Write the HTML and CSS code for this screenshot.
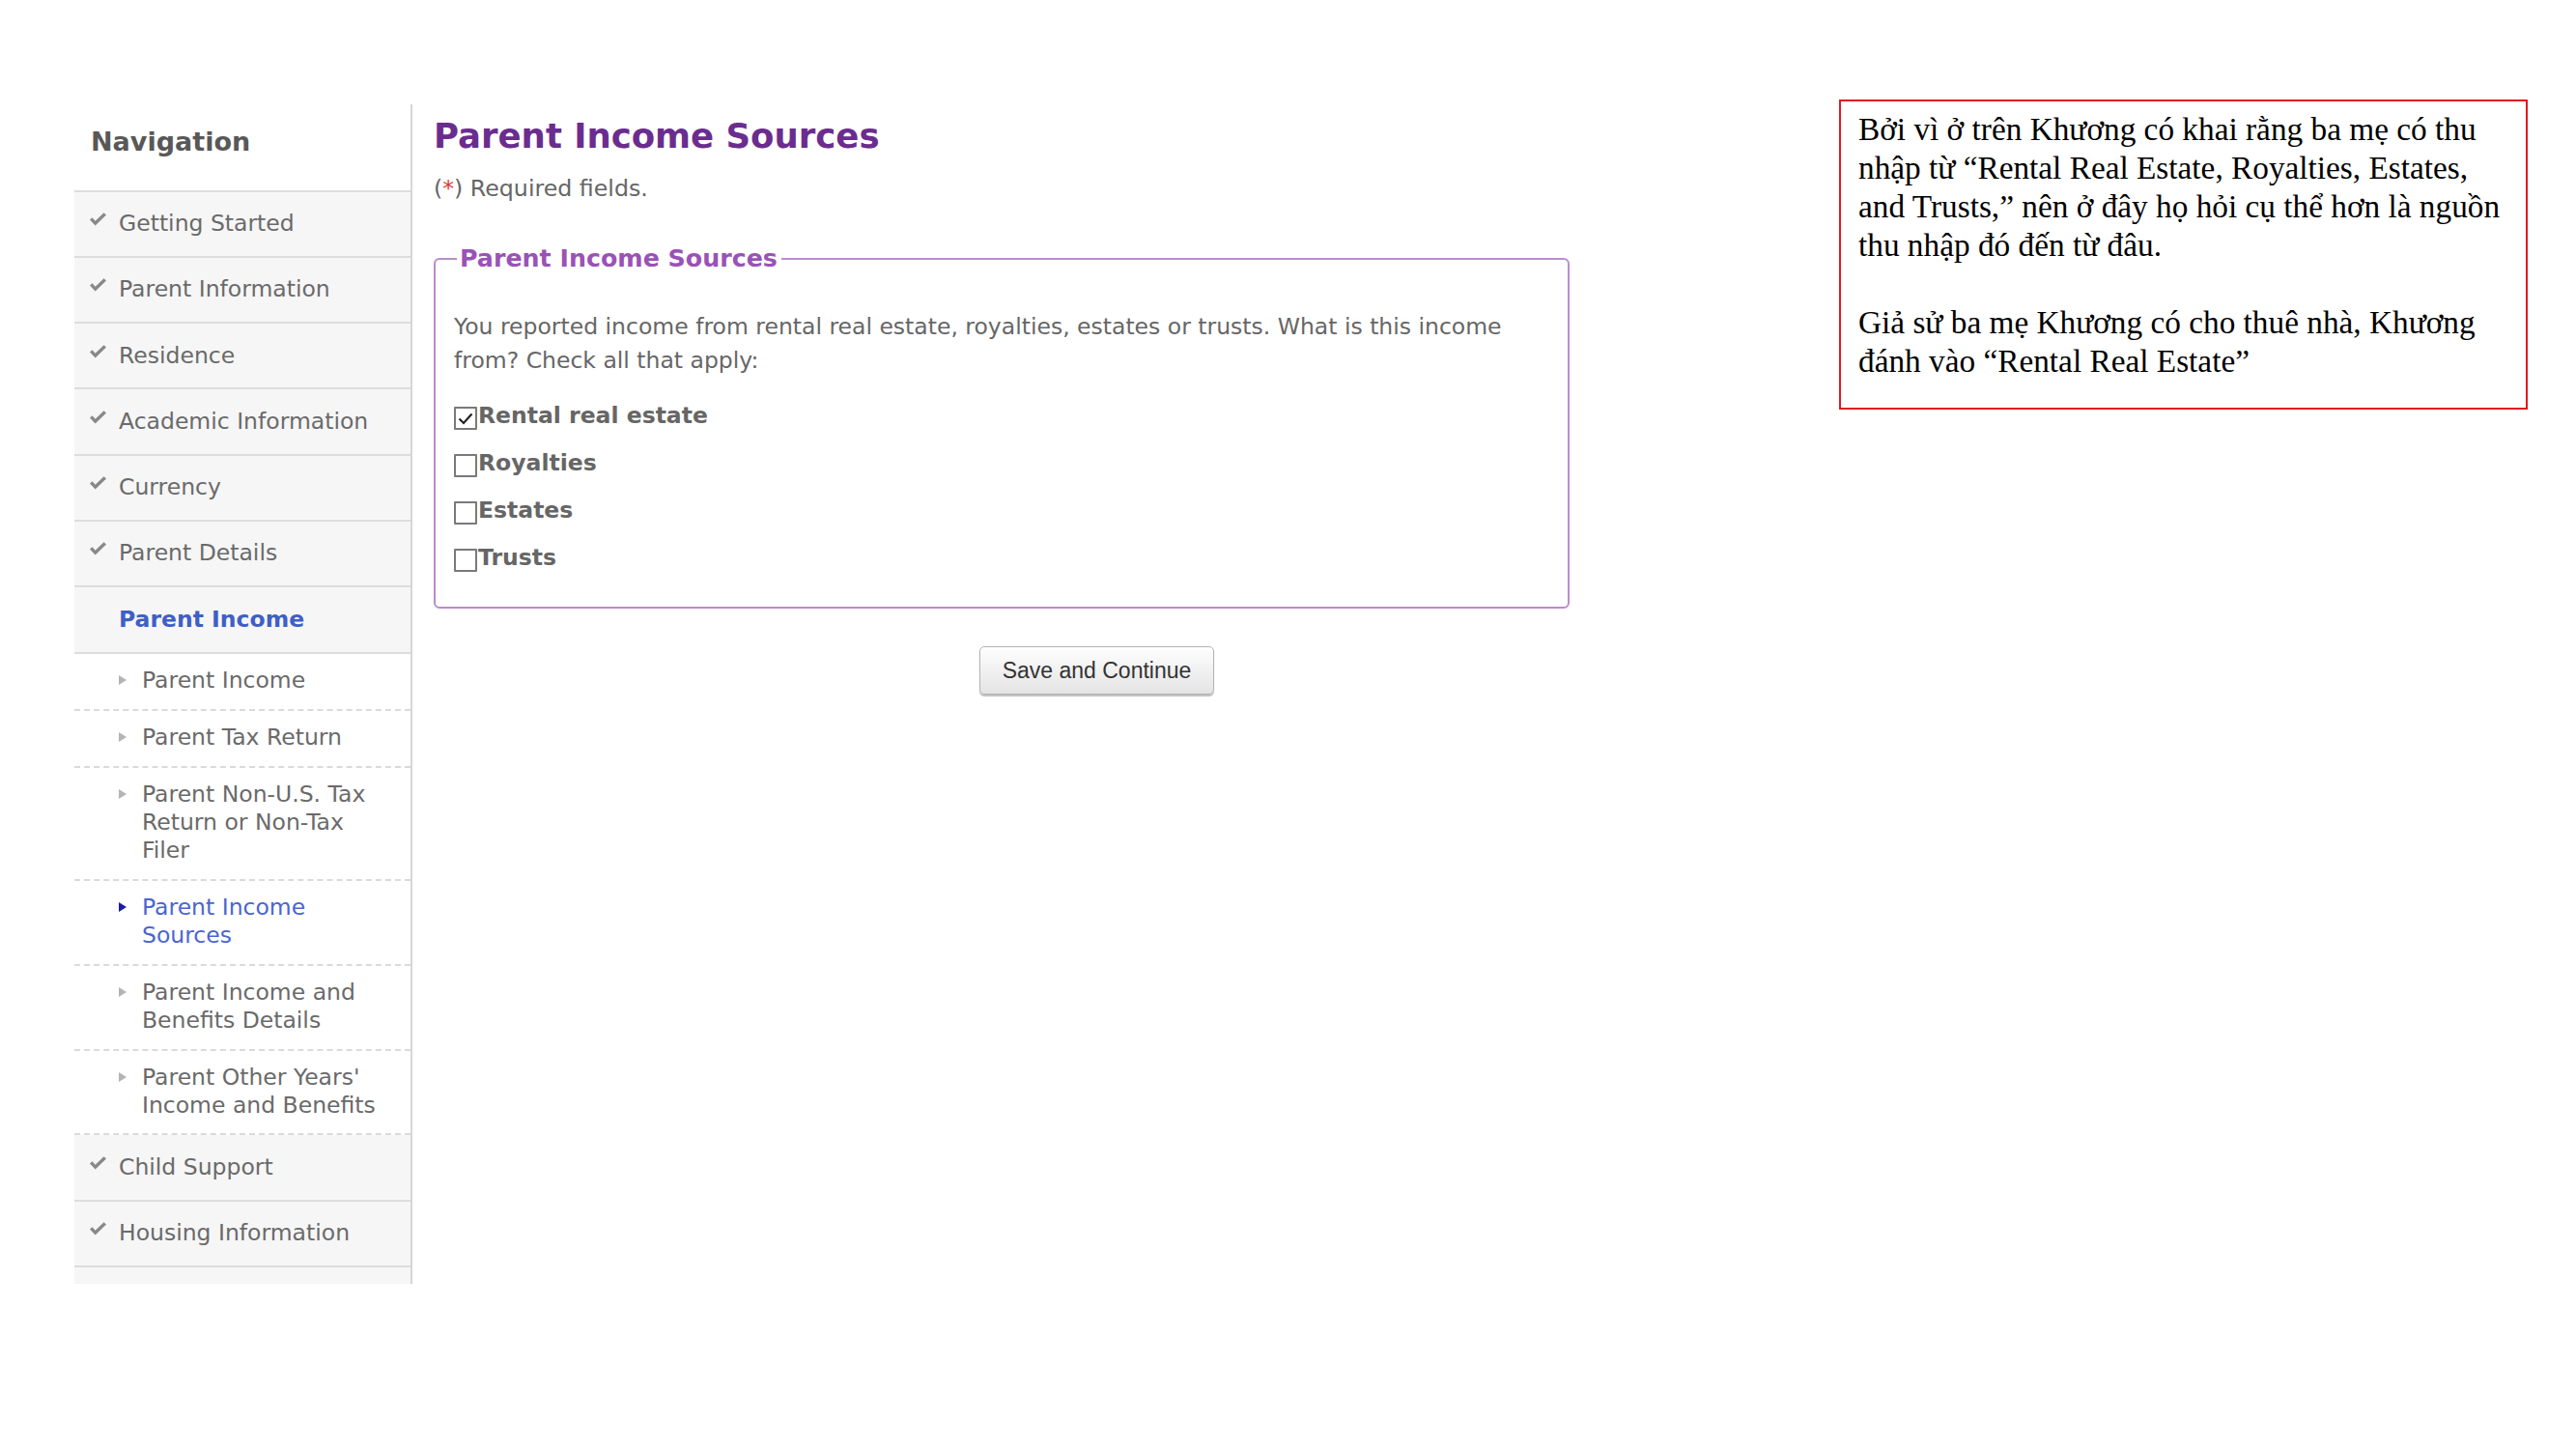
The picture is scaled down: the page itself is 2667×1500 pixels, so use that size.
FILE: index.html
```html
<!DOCTYPE html>
<html lang="en">
<head>
<meta charset="utf-8">
<title>Parent Income Sources</title>
<link rel="stylesheet" href="styles.css">
</head>
<body>
<div class="page">
  <aside class="nav">
    <div class="nav-head">Navigation</div>
    <ul class="nav-list">
      <li class="nav-item"><span class="ico"><svg class="tick" viewBox="0 0 15 12" width="17" height="14"><path d="M0 6.4 L2.2 4.4 L5 7.6 L12.8 0 L15 2 L5 11.8 Z"/></svg></span><span class="lbl">Getting Started</span></li>
      <li class="nav-item"><span class="ico"><svg class="tick" viewBox="0 0 15 12" width="17" height="14"><path d="M0 6.4 L2.2 4.4 L5 7.6 L12.8 0 L15 2 L5 11.8 Z"/></svg></span><span class="lbl">Parent Information</span></li>
      <li class="nav-item"><span class="ico"><svg class="tick" viewBox="0 0 15 12" width="17" height="14"><path d="M0 6.4 L2.2 4.4 L5 7.6 L12.8 0 L15 2 L5 11.8 Z"/></svg></span><span class="lbl">Residence</span></li>
      <li class="nav-item"><span class="ico"><svg class="tick" viewBox="0 0 15 12" width="17" height="14"><path d="M0 6.4 L2.2 4.4 L5 7.6 L12.8 0 L15 2 L5 11.8 Z"/></svg></span><span class="lbl">Academic Information</span></li>
      <li class="nav-item"><span class="ico"><svg class="tick" viewBox="0 0 15 12" width="17" height="14"><path d="M0 6.4 L2.2 4.4 L5 7.6 L12.8 0 L15 2 L5 11.8 Z"/></svg></span><span class="lbl">Currency</span></li>
      <li class="nav-item"><span class="ico"><svg class="tick" viewBox="0 0 15 12" width="17" height="14"><path d="M0 6.4 L2.2 4.4 L5 7.6 L12.8 0 L15 2 L5 11.8 Z"/></svg></span><span class="lbl">Parent Details</span></li>
      <li class="nav-item current"><span class="ico"></span><span class="lbl">Parent Income</span></li>
      <li class="sub"><span class="tri-wrap"><span class="tri"></span></span><span class="lbl">Parent Income</span></li>
      <li class="sub"><span class="tri-wrap"><span class="tri"></span></span><span class="lbl">Parent Tax Return</span></li>
      <li class="sub"><span class="tri-wrap"><span class="tri"></span></span><span class="lbl">Parent Non-U.S. Tax Return or Non-Tax Filer</span></li>
      <li class="sub active"><span class="tri-wrap"><span class="tri"></span></span><span class="lbl">Parent Income Sources</span></li>
      <li class="sub"><span class="tri-wrap"><span class="tri"></span></span><span class="lbl">Parent Income and Benefits Details</span></li>
      <li class="sub"><span class="tri-wrap"><span class="tri"></span></span><span class="lbl">Parent Other Years' Income and Benefits</span></li>
      <li class="nav-item"><span class="ico"><svg class="tick" viewBox="0 0 15 12" width="17" height="14"><path d="M0 6.4 L2.2 4.4 L5 7.6 L12.8 0 L15 2 L5 11.8 Z"/></svg></span><span class="lbl">Child Support</span></li>
      <li class="nav-item"><span class="ico"><svg class="tick" viewBox="0 0 15 12" width="17" height="14"><path d="M0 6.4 L2.2 4.4 L5 7.6 L12.8 0 L15 2 L5 11.8 Z"/></svg></span><span class="lbl">Housing Information</span></li>
      <li class="nav-tail"></li>
    </ul>
  </aside>

  <main class="main">
    <h1 class="title">Parent Income Sources</h1>
    <p class="req">(<span class="star">*</span>) Required fields.</p>
    <fieldset class="box">
      <legend class="box-legend">Parent Income Sources</legend>
      <p class="question">You reported income from rental real estate, royalties, estates or trusts. What is this income from? Check all that apply:</p>
      <div class="options">
        <div class="opt"><span class="cb"><svg viewBox="0 0 20 20" width="20" height="20"><path d="M3.5 10.5 L8 15 L16.5 5.5" fill="none" stroke="#222" stroke-width="2.2"/></svg></span><span class="opt-lbl">Rental real estate</span></div>
        <div class="opt"><span class="cb"></span><span class="opt-lbl">Royalties</span></div>
        <div class="opt"><span class="cb"></span><span class="opt-lbl">Estates</span></div>
        <div class="opt"><span class="cb"></span><span class="opt-lbl">Trusts</span></div>
      </div>
    </fieldset>
    <div class="actions"><button class="btn" type="button">Save and Continue</button></div>
  </main>

  <div class="note">
    <p class="note-p">Bởi vì ở trên Khương có khai rằng ba mẹ có thu<br>nhập từ “Rental Real Estate, Royalties, Estates,<br>and Trusts,” nên ở đây họ hỏi cụ thể hơn là nguồn<br>thu nhập đó đến từ đâu.</p>
    <p class="note-p">Giả sử ba mẹ Khương có cho thuê nhà, Khương<br>đánh vào “Rental Real Estate”</p>
  </div>
</div>
</body>
</html>
```

FILE: styles.css
```css
html, body {
  margin: 0;
  padding: 0;
  background: #ffffff;
}

body {
  font-family: "DejaVu Sans", Verdana, sans-serif;
  color: #666666;
}

.page {
  display: flex;
  align-items: flex-start;
  padding: 103px 0 0 77px;
}

/* ---------- Sidebar navigation ---------- */
.nav {
  flex: none;
  width: 350px;
  box-sizing: border-box;
  margin-top: 5px;
  border-right: 2px solid #d6d6d6;
}

.nav-head {
  height: 90.5px;
  box-sizing: border-box;
  padding: 21px 0 0 17px;
  font-size: 27px;
  line-height: 36px;
  font-weight: bold;
  color: #585858;
  border-bottom: 2px solid #dddddd;
  background: #ffffff;
}

.nav-list {
  list-style: none;
  margin: 0;
  padding: 0;
}

.nav-item {
  display: flex;
  align-items: flex-start;
  padding: 18.5px 10px 18.8px 0;
  font-size: 23.5px;
  line-height: 29px;
  color: #6a6a6a;
  background: #f6f6f6;
  border-bottom: 2px solid #dddddd;
}

.ico {
  flex: none;
  width: 46px;
  box-sizing: border-box;
  padding: 3px 0 0 16px;
  height: 29px;
}

.tick {
  display: block;
  fill: #888888;
}

.nav-item.current .lbl {
  color: #3f5fc6;
  font-weight: bold;
}

.sub {
  display: flex;
  align-items: flex-start;
  padding: 13.6px 28px 14.4px 0;
  font-size: 23.5px;
  line-height: 29px;
  color: #6a6a6a;
  background: #ffffff;
  border-bottom: 2px dashed #dadada;
}

.tri-wrap {
  flex: none;
  width: 70px;
  box-sizing: border-box;
  padding: 9px 0 0 46px;
  height: 29px;
}

.tri {
  display: block;
  width: 0;
  height: 0;
  border-left: 8px solid #b4b4b4;
  border-top: 5.5px solid transparent;
  border-bottom: 5.5px solid transparent;
}

.sub.active .tri {
  border-left-color: #1c1ca8;
}

.sub.active .lbl {
  color: #4a66cf;
}

.nav-tail {
  height: 17px;
  background: #f6f6f6;
}

/* ---------- Main content ---------- */
.main {
  flex: none;
  width: 1176px;
  margin: 5px 0 0 22px;
}

.title {
  margin: 12px 0 0;
  font-size: 35.5px;
  line-height: 42px;
  font-weight: bold;
  color: #6b2c8f;
}

.req {
  margin: 19px 0 0;
  font-size: 23.7px;
  line-height: 29px;
  color: #666666;
}

.star {
  color: #e23a3a;
}

.box {
  margin: 43px 0 0;
  padding: 38px 40px 36px 19px;
  border: 2px solid #ba8ccc;
  border-radius: 6px;
  min-width: 0;
}

.box-legend {
  margin-left: 3px;
  padding: 0 4px 0 3px;
  font-size: 25.3px;
  line-height: 30px;
  font-weight: bold;
  color: #9a52b6;
}

.question {
  margin: 0;
  font-size: 23.5px;
  line-height: 35px;
  color: #666666;
}

.options {
  margin-top: 25px;
  display: flex;
  flex-direction: column;
  gap: 20px;
}

.opt {
  font-size: 23.5px;
  line-height: 29px;
  font-weight: bold;
  color: #666666;
}

.cb {
  display: inline-block;
  width: 24px;
  height: 24px;
  box-sizing: border-box;
  border: 2px solid #7a7a7a;
  border-radius: 1px;
  background: #ffffff;
  vertical-align: -7px;
  margin-right: 1px;
}

.cb svg {
  display: block;
}

.actions {
  margin-top: 39px;
  padding-left: 565px;
}

.btn {
  width: 243px;
  height: 50px;
  padding: 0;
  font-family: "Liberation Sans", Arial, sans-serif;
  font-size: 23px;
  color: #333333;
  background: linear-gradient(#fefefe, #e4e4e4);
  border: 1px solid #b4b4b4;
  border-radius: 5px;
  box-shadow: 0 2px 1px rgba(0, 0, 0, 0.25);
}

/* ---------- Annotation note ---------- */
.note {
  flex: none;
  width: 713px;
  box-sizing: border-box;
  margin-left: 279px;
  padding: 9px 10px 28px 18px;
  border: 2px solid #e01b1b;
  font-family: "Liberation Serif", "Times New Roman", serif;
  font-size: 33.3px;
  line-height: 40px;
  color: #000000;
  white-space: nowrap;
}

.note-p {
  margin: 0;
}

.note-p + .note-p {
  margin-top: 40px;
}
```
